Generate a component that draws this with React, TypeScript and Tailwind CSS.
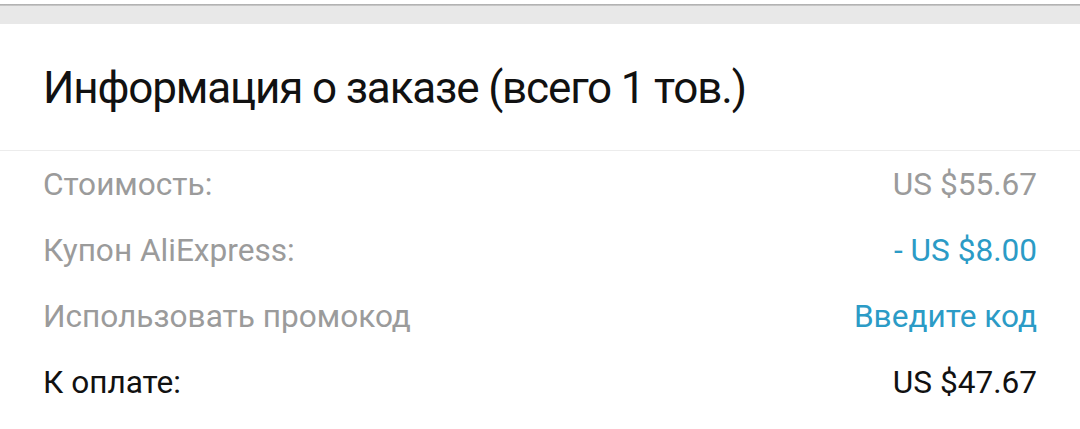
import React from "react";

const rows = [
  { label: "Стоимость:", value: "US $55.67", labelColor: "text-[#9b9b9b]", valueColor: "text-[#9b9b9b]" },
  { label: "Купон AliExpress:", value: "- US $8.00", labelColor: "text-[#9b9b9b]", valueColor: "text-[#2b9bc6]" },
  { label: "Использовать промокод", value: "Введите код", labelColor: "text-[#9b9b9b]", valueColor: "text-[#2b9bc6]" },
  { label: "К оплате:", value: "US $47.67", labelColor: "text-[#111111]", valueColor: "text-[#111111]" },
];

export default function App() {
  return (
    <div className="w-[1080px] h-[429px] bg-white overflow-hidden font-['Roboto','Liberation_Sans',sans-serif]">
      {/* top strip */}
      <div className="h-[4px] bg-white"></div>
      <div className="h-[2px] bg-gradient-to-b from-[#a9a9a9] to-[#cfcfcf]"></div>
      <div className="h-[18px] bg-[#e8e8e8]"></div>

      {/* header */}
      <div className="h-[127px] flex items-center px-[43px] pt-[1px] border-b border-[#ececec]">
        <h1 className="text-[44px] leading-[56px] tracking-[-1.15px] text-[#111111] font-normal">
          Информация о заказе (всего 1 тов.)
        </h1>
      </div>

      {/* summary rows */}
      <div className="flex flex-col px-[43px] pt-[1px]">
        {rows.map((r) => (
          <div key={r.label} className="h-[66px] flex items-center justify-between text-[31.6px] leading-[38px]">
            <span className={r.labelColor}>{r.label}</span>
            <span className={r.valueColor}>{r.value}</span>
          </div>
        ))}
      </div>
    </div>
  );
}
